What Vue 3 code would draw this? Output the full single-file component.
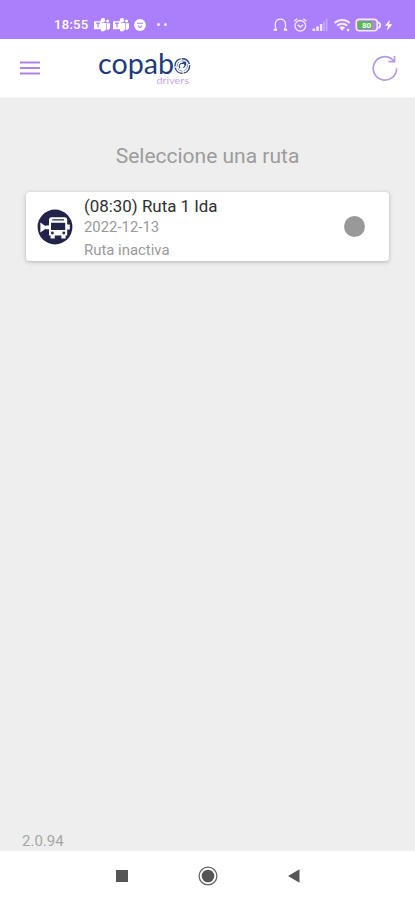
<script setup>
const routes = [{ id: 1, title: '(08:30) Ruta 1 Ida', date: '2022-12-13', status: 'Ruta inactiva' }]
</script>

<template>
  <div class="screen">
    <div class="status">
      <div class="status-left">
        <span class="time">18:55</span>
        <svg v-for="n in 2" :key="n" class="teams" width="16" height="16" viewBox="0 0 16 16" fill="#fff">
          <circle cx="9" cy="3.2" r="2.2" /><circle cx="13.6" cy="4" r="1.5" />
          <path d="M7 6h5.2v5.5a3.6 3.6 0 0 1-5.2 2.6z" /><path d="M12.8 6.3H16v4.2a2.4 2.4 0 0 1-3.2 2.2z" />
          <path d="M0 4.2h8v8H0z" />
          <path d="M2 6.2h4M4 6.2v4.3" stroke="#ab7ffb" stroke-width="1.2" />
        </svg>
        <svg class="chat" width="12" height="12" viewBox="0 0 12 12">
          <circle cx="6" cy="6" r="5.9" fill="#fff" />
          <path d="M3 4.2h6M3.8 6.6l2.2 2 2.2-2" fill="none" stroke="#ab7ffb" stroke-width="1.1" />
        </svg>
        <i class="dot"></i><i class="dot"></i>
      </div>
      <svg class="status-right" width="121" height="18" viewBox="0 0 121 18" fill="none" stroke="#f3eaff" stroke-width="1.3">
        <path d="M3.4 14.2C.8 9 2.2 3.2 7.4 3.2s6.6 5.8 4 11" />
        <path d="M.6 13.8h3.4M10.8 13.8h3.4" stroke-width="2" />
        <circle cx="27.3" cy="9.8" r="5.3" /><path d="M24.7 8.7l2.6 2.4 2.8-2.4M21.1 5.2l3.2-2.4M33.5 5.2l-3.2-2.4" />
        <g stroke="none"><path d="M39.5 12.5h2.6V15h-2.6zM43.2 10.5h2.6V15h-2.6zM46.9 8h2.4v7h-2.4z" fill="#efe4ff" /><path d="M50.3 5.5h1.6V15h-1.6zM52.8 3h1.6v12h-1.6z" fill="#c7a8ff" /></g>
        <path d="M61.7 7a11 11 0 0 1 15 0M64.2 9.7a7.3 7.3 0 0 1 10 0" stroke-width="1.9" />
        <path d="M66.2 11.5a4.5 4.5 0 0 1 6 0l-3 3.2z" fill="#f3eaff" stroke="none" />
        <path d="M75 12.8v2.4" stroke-width="2.4" />
        <rect x="83.2" y="3.4" width="21" height="11.4" rx="3" stroke-width="1.6" />
        <path d="M105 6.3c3 .7 3 5 0 5.7" stroke-width="1.7" />
        <rect x="85" y="5.2" width="17.4" height="7.8" rx="1" fill="#a58fd6" stroke="none" />
        <rect x="85" y="5.2" width="14" height="7.8" rx="1" fill="#54bb45" stroke="none" />
        <text x="89" y="12.2" class="charge" stroke="none">80</text>
        <path d="M117 3.8l-5 6h3l-1.2 5 5.5-6.6h-3.2z" fill="#fff" stroke="none" />
      </svg>
    </div>

    <header class="header">
      <svg class="menu" width="20" height="14" viewBox="0 0 20 14">
        <path d="M0 1.5h20M0 7h20M0 12.5h20" stroke="#ad82ee" stroke-width="1.9" />
      </svg>
      <svg class="logo" width="96" height="42" viewBox="0 0 96 42">
        <text x="0" y="26.8" class="brand" textLength="76" lengthAdjust="spacingAndGlyphs">copab</text>
        <g fill="none" stroke="#294583">
          <circle cx="84.3" cy="19" r="7.3" stroke-width="1.4" stroke-dasharray="10 1.2" />
          <circle cx="84.3" cy="19" r="5.2" stroke-width="1" stroke-dasharray="6 1.4" stroke="#8896be" />
          <path d="M82 21.2a3 3 0 0 1 .7-4.6l3.2-.4 1.3 2.4-1.8 2.4" stroke-width="1.1" />
          <path d="M84 14.8h4.2v4.2z" fill="#294583" stroke="none" />
        </g>
        <text x="58.5" y="37.4" class="sub" textLength="32.5" lengthAdjust="spacingAndGlyphs">drivers</text>
      </svg>
      <svg class="refresh" width="28" height="28" viewBox="0 0 28 28" fill="none" stroke="#b69be9" stroke-width="1.7">
        <path d="M25.6 14.2A11.7 11.7 0 1 1 20.6 4.8L23 7.2" />
        <path d="M23.5 1.9v5.8h-6.2" />
      </svg>
    </header>

    <main class="content">
      <h1>Seleccione una ruta</h1>
      <div v-for="r in routes" :key="r.id" class="card">
        <svg class="bus" width="36" height="36" viewBox="0 0 36 36">
          <circle cx="18" cy="18" r="17.4" fill="#22234b" />
          <g fill="#fff">
            <path d="M3.4 13.6l5.6 3.8v2l-5.6 4.2z" />
            <path d="M8.6 16.4H13v3.8H8.6zM29.5 15.4h3.3v5h-3.3z" />
            <path d="M14.6 8.2h13a2.6 2.6 0 0 1 2.6 2.6v15.6h-1.6v3.2h-4.2v-3.2h-6.6v3.2h-4.2v-3.2H12V10.8a2.6 2.6 0 0 1 2.6-2.6z" />
          </g>
          <path d="M15.2 10.2h11.8v1.4H15.2zM14 13.8h14.2v7.2H14z" fill="#22234b" />
          <circle cx="15.4" cy="24" r="1.4" fill="#22234b" /><circle cx="26.8" cy="24" r="1.4" fill="#22234b" />
        </svg>
        <div class="info">
          <div class="title">{{ r.title }}</div>
          <div class="date">{{ r.date }}</div>
          <div class="state">{{ r.status }}</div>
        </div>
        <span class="indicator"></span>
      </div>
      <div class="version">2.0.94</div>
    </main>

    <nav class="nav">
      <svg width="20" height="20" viewBox="0 0 20 20"><path d="M4 4h12v12H4z" fill="#555" /></svg>
      <svg width="20" height="20" viewBox="0 0 20 20"><circle cx="10" cy="10" r="8.9" fill="none" stroke="#666" stroke-width="1.3" /><circle cx="10" cy="10" r="6.3" fill="#555" /></svg>
      <svg width="20" height="20" viewBox="0 0 20 20"><path d="M4 10l11.5-6.8v13.6z" fill="#555" /></svg>
    </nav>
  </div>
</template>

<style>
body { margin: 0; }
</style>
<style scoped>
.screen { width: 415px; height: 900px; display: flex; flex-direction: column; background: #eee; font-family: Roboto, sans-serif; overflow: hidden; }
.status { height: 39px; flex: none; box-sizing: border-box; padding: 10px 21px 0 54px; display: flex; justify-content: space-between; align-items: center; background: #ab7ffb; }
.status-left { display: flex; align-items: center; }
.time { width: 40px; font-size: 13px; font-weight: 500; letter-spacing: .3px; color: #fff; }
.teams { margin-right: 3px; }
.chat { margin: 0 11px 0 2px; }
.dot { flex: none; width: 3px; height: 3px; border-radius: 50%; background: #f3eaff; margin-right: 4px; }
.charge { font: 700 8px Roboto, sans-serif; fill: #fff; }
.header { height: 59px; flex: none; box-sizing: border-box; padding: 0 16px 0 20px; display: flex; align-items: center; background: #fff; border-bottom: 1px solid #f5f5f5; }
.menu { margin-right: 58px; }
.logo { overflow: visible; }
.brand { font: 400 29px Lato, sans-serif; fill: #203c7c; }
.sub { font: 400 10px Lato, sans-serif; fill: #c5a9f5; }
.refresh { margin-left: auto; }
.content { flex: 1; display: flex; flex-direction: column; padding: 0 26px; }
h1 { margin: 44px 0 22px; text-align: center; font-size: 21px; line-height: 28px; font-weight: 400; color: #9c9c9c; }
.card { height: 69px; box-sizing: border-box; display: flex; align-items: center; padding: 0 24px 0 11px; background: #fff; border-radius: 4px; box-shadow: 0 1px 4px rgba(0, 0, 0, .25); }
.info { margin-left: 11px; padding-top: 3px; flex: 1; }
.title { font-size: 16.9px; line-height: 22px; color: #303030; }
.date { font-size: 14.9px; line-height: 21px; color: #999; }
.state { font-size: 14.9px; line-height: 24px; color: #999; }
.indicator { width: 21px; height: 21px; border-radius: 50%; background: #999; }
.version { margin: auto 0 0 -4px; font-size: 15px; line-height: 20px; color: #a6a6a6; }
.nav { height: 49px; flex: none; display: flex; justify-content: center; align-items: center; gap: 66px; background: #fff; }
</style>
